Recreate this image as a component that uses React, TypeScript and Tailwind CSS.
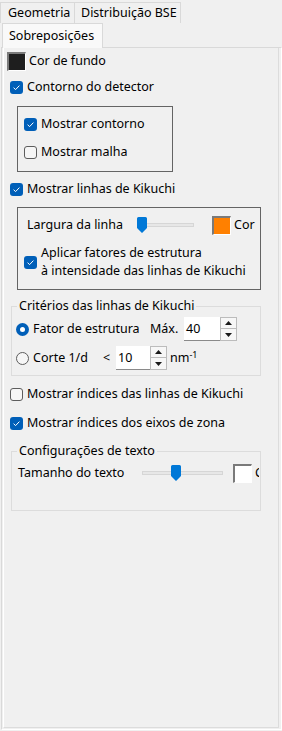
import React from 'react';

function Check({ checked }: { checked?: boolean }) {
  if (checked) {
    return (
      <span className="flex h-[13px] w-[13px] shrink-0 items-center justify-center rounded-[3px] bg-[#005fb8]">
        <svg width="9" height="9" viewBox="0 0 9 9">
          <path d="M1.6 4.7 L3.6 6.6 L7.4 2.6" stroke="#ffffff" strokeWidth="1" fill="none" />
        </svg>
      </span>
    );
  }
  return <span className="h-[13px] w-[13px] shrink-0 rounded-[3px] border border-[#5d5d5d] bg-[#f6f6f6]" />;
}

function Radio({ checked }: { checked?: boolean }) {
  if (checked) {
    return (
      <span className="flex h-[13px] w-[13px] shrink-0 items-center justify-center rounded-full bg-[#005fb8]">
        <span className="h-[5px] w-[5px] rounded-full bg-white" />
      </span>
    );
  }
  return <span className="h-[13px] w-[13px] shrink-0 rounded-full border border-[#5d5d5d] bg-[#f6f6f6]" />;
}

function CheckRow({ checked, label, className = '' }: { checked?: boolean; label: string; className?: string }) {
  return (
    <div className={`flex h-[20px] items-center gap-[4px] ${className}`}>
      <Check checked={checked} />
      <span>{label}</span>
    </div>
  );
}

function Swatch({ color }: { color: string }) {
  return (
    <span className="flex h-[19px] w-[19px] shrink-0 border-t-2 border-l-2 border-r border-b border-t-[#7a7a7a] border-l-[#7a7a7a] border-r-white border-b-white">
      <span className={`flex-1 ${color}`} />
    </span>
  );
}

function Slider({ width, thumb }: { width: string; thumb: string }) {
  return (
    <div className={`relative flex h-[16px] items-center ${width}`}>
      <div className="h-[4px] w-full border border-[#d6d6d6] bg-[#e7e7e7]" />
      <svg className={`absolute top-0 ${thumb}`} width="10" height="16" viewBox="0 0 10 16">
        <path d="M1.5 0 H8.5 A1.5 1.5 0 0 1 10 1.5 V11 L5 16 L0 11 V1.5 A1.5 1.5 0 0 1 1.5 0 Z" fill="#0078d7" />
      </svg>
    </div>
  );
}

function Spinner() {
  return (
    <div className="flex h-[24px] w-[17px] flex-col">
      <div className="flex h-[12px] items-center justify-center border border-[#bcbcbc] bg-[#f7f7f7]">
        <svg width="7" height="4" viewBox="0 0 7 4"><path d="M0 4 L3.5 0 L7 4 Z" fill="#1a1a1a" /></svg>
      </div>
      <div className="flex h-[12px] items-center justify-center border border-t-0 border-[#bcbcbc] bg-[#f7f7f7]">
        <svg width="7" height="4" viewBox="0 0 7 4"><path d="M0 0 L7 0 L3.5 4 Z" fill="#1a1a1a" /></svg>
      </div>
    </div>
  );
}

function NumInput({ value, width }: { value: string; width: string }) {
  return (
    <div className={`flex h-[24px] items-center border-b border-[#8a8a8a] bg-white pl-[2px] ${width}`}>
      {value}
    </div>
  );
}

export default function App() {
  return (
    <div className="flex h-[731px] w-[282px] flex-col overflow-hidden bg-[#f0f0f0] font-['Noto_Sans',sans-serif] text-[12.5px] leading-[16px] text-black">
      {/* tabs */}
      <div className="flex pt-[2px]">
        <div className="flex h-[21px] w-[75px] items-center border border-b-0 border-[#d9d9d9] pl-[7px]">Geometria</div>
        <div className="flex h-[21px] w-[106px] items-center border border-b-0 border-l-0 border-[#d9d9d9] pl-[6px]">Distribuição BSE</div>
      </div>
      <div className="relative z-10 -mb-px ml-[2px] flex h-[25px] w-[101px] items-center border border-b-0 border-[#d9d9d9] bg-[#f9f9f9] pl-[6px]">
        Sobreposições
      </div>

      {/* panel */}
      <div className="mb-[1px] ml-[1px] flex w-[281px] flex-1 border border-[#d9d9d9] border-r-white border-b-white">
        <div className="mb-[1px] ml-[1px] flex w-[276px] flex-col border-l border-r border-b border-l-white border-r-[#dcdcdc] border-b-[#dcdcdc]">
          {/* Cor de fundo */}
          <div className="ml-[3px] mt-[3px] flex h-[20px] items-center gap-[3px]">
            <Swatch color="bg-[#1e1e1e]" />
            <span>Cor de fundo</span>
          </div>

          <CheckRow checked label="Contorno do detector" className="ml-[6px] mt-[6px]" />

          <div className="ml-[13px] mt-[9px] flex h-[66px] w-[156px] flex-col border border-[#646464] pl-[6px] pt-[7px]">
            <CheckRow checked label="Mostrar contorno" />
            <CheckRow label="Mostrar malha" className="mt-[8px]" />
          </div>

          <CheckRow checked label="Mostrar linhas de Kikuchi" className="ml-[6px] mt-[7px]" />

          <div className="ml-[13px] mt-[8px] flex h-[83px] w-[244px] flex-col border border-[#646464] pt-[7px]">
            <div className="flex h-[20px] items-center pl-[9px]">
              <span className="w-[110px]">Largura da linha</span>
              <Slider width="w-[57px]" thumb="left-0" />
              <span className="ml-[18px]">
                <Swatch color="bg-[#ff8000]" />
              </span>
              <span className="ml-[3px]">Cor</span>
            </div>
            <div className="mt-[9px] flex items-center gap-[4px] pl-[6px]">
              <Check checked />
              <span className="leading-[18px]">
                Aplicar fatores de estrutura
                <br />à intensidade das linhas de Kikuchi
              </span>
            </div>
          </div>

          <fieldset className="ml-[7px] mt-[8px] w-[250px] border border-[#dcdcdc] pb-[5px]">
            <legend className="ml-[5px] px-[2px] leading-[16px]">Critérios das linhas de Kikuchi</legend>
            <div className="mt-[3px] flex h-[24px] items-center pl-[4px]">
              <Radio checked />
              <span className="ml-[4px] w-[117px]">Fator de estrutura</span>
              <span className="w-[34px]">Máx.</span>
              <NumInput value="40" width="w-[36px]" />
              <Spinner />
            </div>
            <div className="mt-[5px] flex h-[24px] items-center pl-[4px]">
              <Radio />
              <span className="ml-[4px] w-[70px]">Corte 1/d</span>
              <span className="w-[13px]">&lt;</span>
              <NumInput value="10" width="w-[34px]" />
              <Spinner />
              <span className="ml-[3px]">
                nm<sup className="text-[9px]">-1</sup>
              </span>
            </div>
          </fieldset>

          <CheckRow label="Mostrar índices das linhas de Kikuchi" className="ml-[6px] mt-[8px]" />
          <CheckRow checked label="Mostrar índices dos eixos de zona" className="ml-[6px] mt-[9px]" />

          <fieldset className="ml-[7px] mt-[10px] w-[250px] border border-[#dcdcdc] pb-[27px]">
            <legend className="ml-[5px] px-[2px] leading-[16px]">Configurações de texto</legend>
            <div className="mt-[4px] flex h-[20px] items-center pl-[6px]">
              <span className="w-[124px]">Tamanho do texto</span>
              <Slider width="w-[81px]" thumb="left-[29px]" />
              <span className="ml-[10px]">
                <Swatch color="bg-white" />
              </span>
              <span className="ml-[3px] w-[4px] overflow-hidden">Cor</span>
            </div>
          </fieldset>
        </div>
      </div>
    </div>
  );
}
